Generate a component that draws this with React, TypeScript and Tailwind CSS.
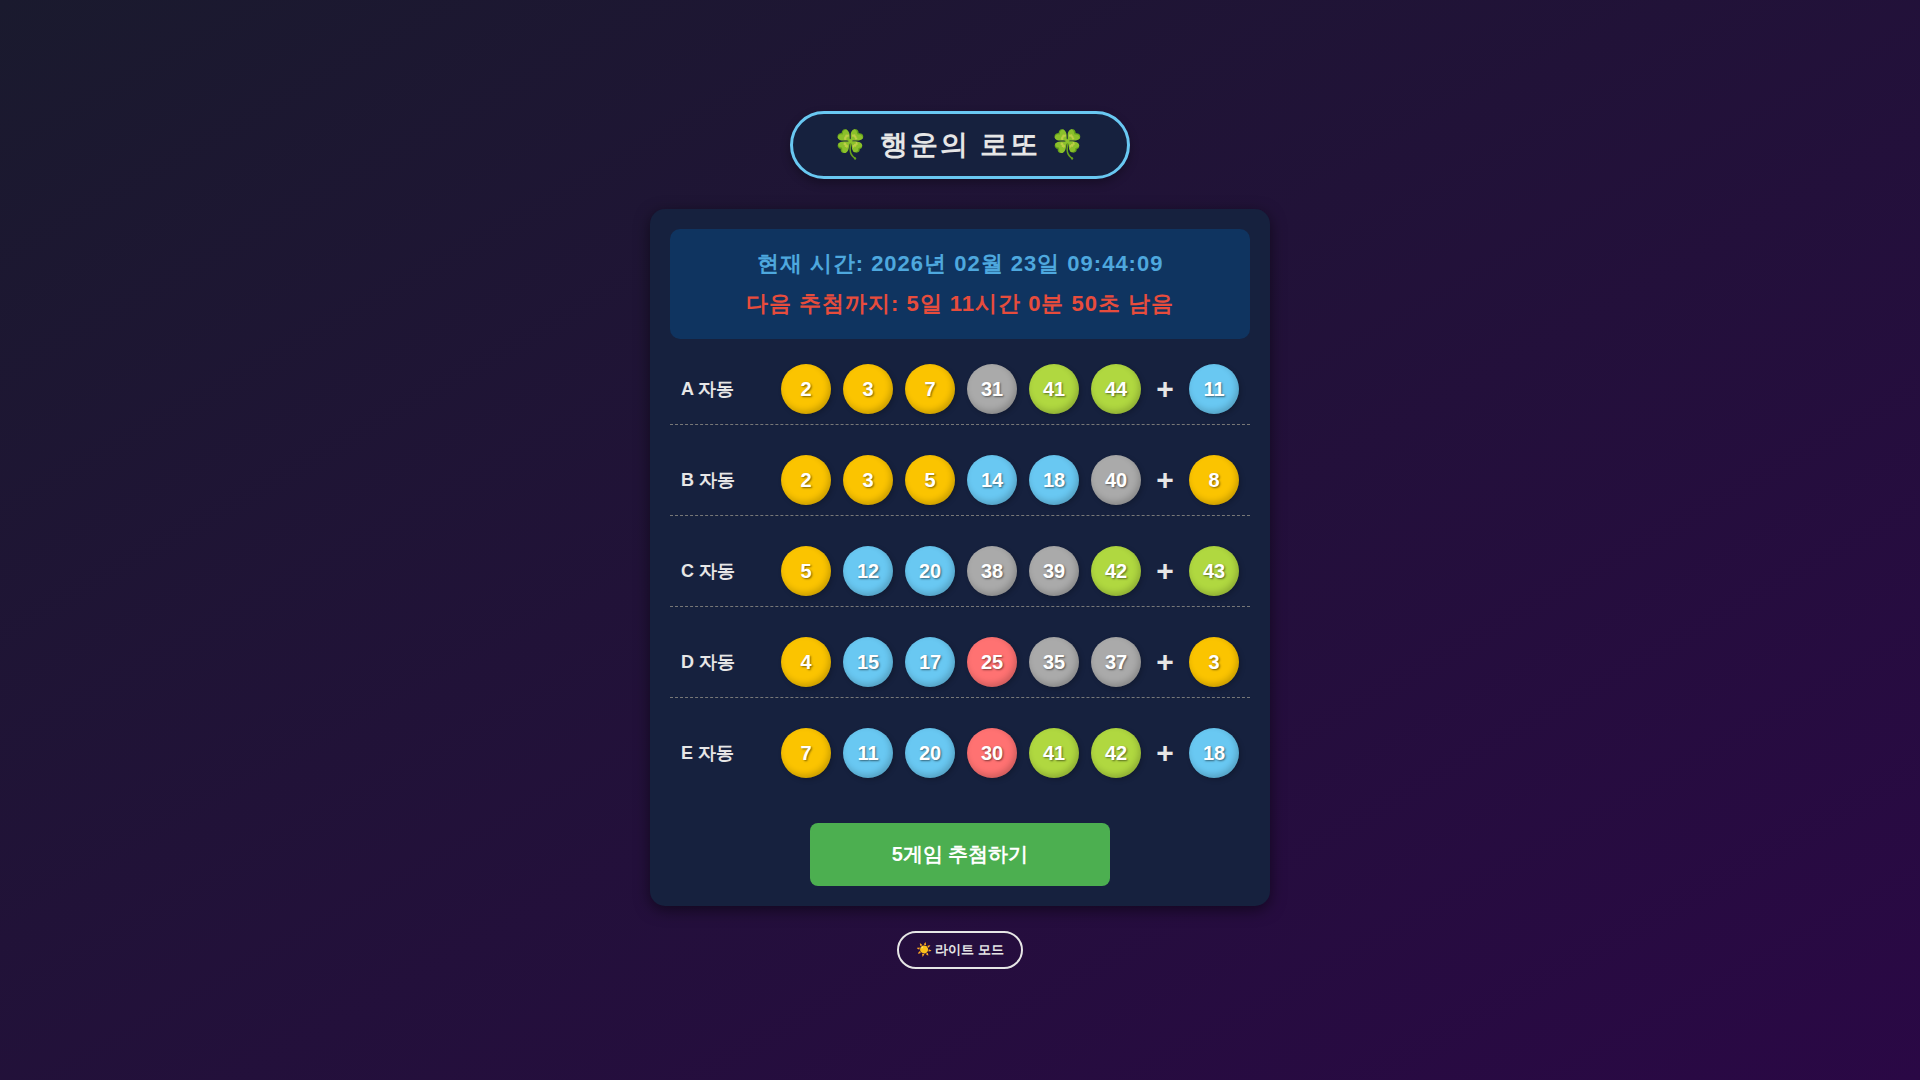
import { useState } from "react";
import clsx from "clsx";

interface Game {
  label: string;
  numbers: number[];
  bonus: number;
}

const GAMES: Game[] = [
  { label: "A", numbers: [2, 3, 7, 31, 41, 44], bonus: 11 },
  { label: "B", numbers: [2, 3, 5, 14, 18, 40], bonus: 8 },
  { label: "C", numbers: [5, 12, 20, 38, 39, 42], bonus: 43 },
  { label: "D", numbers: [4, 15, 17, 25, 35, 37], bonus: 3 },
  { label: "E", numbers: [7, 11, 20, 30, 41, 42], bonus: 18 },
];

function ballColor(n: number) {
  if (n <= 10) return "bg-[#fbc400]";
  if (n <= 20) return "bg-[#69c8f2]";
  if (n <= 30) return "bg-[#ff7272]";
  if (n <= 40) return "bg-[#aaaaaa]";
  return "bg-[#b0d840]";
}

function drawGame(label: string): Game {
  const picked = new Set<number>();
  while (picked.size < 7) picked.add(Math.floor(Math.random() * 45) + 1);
  const all = [...picked];
  return { label, numbers: all.slice(0, 6).sort((a, b) => a - b), bonus: all[6] };
}

function Ball({ n }: { n: number }) {
  return (
    <span
      className={clsx(
        "flex size-[50px] shrink-0 items-center justify-center rounded-full text-xl font-bold text-white",
        "shadow-[inset_-2px_-3px_6px_rgba(0,0,0,0.2),2px_2px_5px_rgba(0,0,0,0.2)] [text-shadow:1px_1px_2px_rgba(0,0,0,0.5)]",
        ballColor(n)
      )}
    >
      {n}
    </span>
  );
}

function GameRow({ game }: { game: Game }) {
  return (
    <li className="flex items-center justify-center gap-3 border-b border-dashed border-[#777777] py-[10px] last:border-b-0">
      <span className="w-[88px] text-lg font-bold">{game.label} 자동</span>
      {game.numbers.map((n) => (
        <Ball key={n} n={n} />
      ))}
      <span className="w-6 text-center text-[30px] leading-8 font-bold">+</span>
      <Ball n={game.bonus} />
    </li>
  );
}

export default function App() {
  const [games, setGames] = useState(GAMES);
  const [light, setLight] = useState(false);

  return (
    <div
      className={clsx(
        "flex min-h-screen flex-col items-center justify-center bg-linear-to-br/srgb font-['Liberation_Sans',sans-serif]",
        light ? "from-[#e0f7fa] to-[#f3e5f5] text-[#333333]" : "from-[#1a1a2e] to-[#2a0845] text-[#e6e6e6]"
      )}
    >
      <h1
        className={clsx(
          "mb-[30px] rounded-[50px] border-3 border-[#69c8f2] px-10 py-[10px] text-[28px] leading-[42px] font-bold tracking-[2px] shadow-[0_4px_10px_rgba(0,0,0,0.3)]",
          light ? "bg-white" : "bg-[#16213e]"
        )}
      >
        🍀 행운의 로또 🍀
      </h1>

      <main
        className={clsx(
          "w-full max-w-[620px] rounded-[15px] p-5 shadow-[0_4px_15px_rgba(0,0,0,0.5)]",
          light ? "bg-white" : "bg-[#16213e]"
        )}
      >
        <section
          className={clsx(
            "mb-[15px] rounded-[10px] p-[15px] text-center text-[22px] leading-10 font-bold tracking-[1px]",
            light ? "bg-[#e3f2fd]" : "bg-[#0f3460]"
          )}
        >
          <p className="text-[#4ea8de]">현재 시간: 2026년 02월 23일 09:44:09</p>
          <p className="text-[#e74c3c]">다음 추첨까지: 5일 11시간 0분 50초 남음</p>
        </section>

        <ul className="flex flex-col gap-5">
          {games.map((g) => (
            <GameRow key={g.label} game={g} />
          ))}
        </ul>

        <button
          type="button"
          onClick={() => setGames(games.map((g) => drawGame(g.label)))}
          className="mx-auto mt-[35px] block w-[300px] cursor-pointer rounded-lg bg-[#4caf50] py-4 text-xl leading-[31px] font-bold text-white"
        >
          5게임 추첨하기
        </button>
      </main>

      <button
        type="button"
        onClick={() => setLight(!light)}
        className="mt-[25px] cursor-pointer rounded-full border-2 border-current px-[17px] py-2 text-[13px] leading-[18px] font-bold"
      >
        {light ? "🌙 다크 모드" : "☀️ 라이트 모드"}
      </button>
    </div>
  );
}
